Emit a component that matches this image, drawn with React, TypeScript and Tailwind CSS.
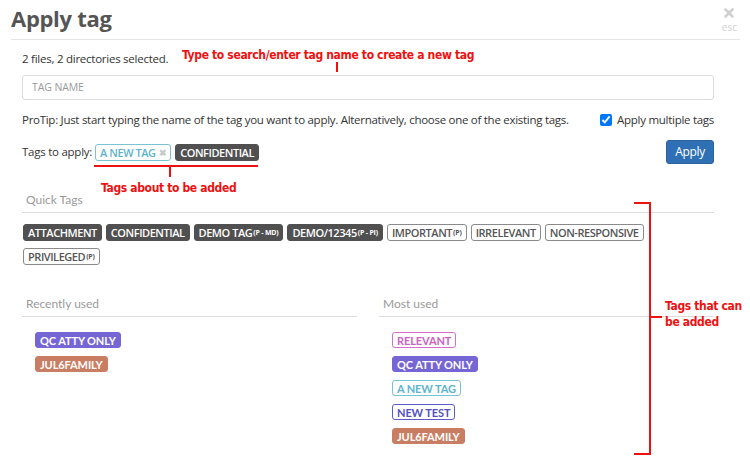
import { X } from "lucide-react";

type TagStyle = "dark" | "outline" | "relevant" | "qc" | "jul" | "newtag" | "newtest";

const tagClasses: Record<TagStyle, string> = {
  dark: "bg-[#505050] border-[#505050] text-white",
  outline: "bg-white border-[#8a8a8a] text-[#555]",
  relevant: "bg-white border-[#d36fcb] text-[#c964c1]",
  qc: "bg-[#7665d4] border-[#7665d4] text-white",
  jul: "bg-[#c97e63] border-[#c97e63] text-white",
  newtag: "bg-white border-[#79c3d3] text-[#5db4cb]",
  newtest: "bg-white border-[#5b5bc8] text-[#5151c2]",
};

function Tag({
  label,
  suffix,
  variant,
  bold,
}: {
  label: string;
  suffix?: string;
  variant: TagStyle;
  bold?: boolean;
}) {
  return (
    <span
      className={`inline-flex items-center px-[4px] rounded-[3px] border leading-none whitespace-nowrap ${
        bold
          ? "h-[16px] font-bold font-['Lato'] text-[11px] tracking-[-0.1px]"
          : "h-[17px] font-semibold text-[11px] tracking-[-0.45px]"
      } ${tagClasses[variant]}`}
    >
      {label}
      {suffix && (
        <span className="ml-[1px] text-[7px] font-bold tracking-[-0.2px]">{suffix}</span>
      )}
    </span>
  );
}

const redText =
  "text-[12px] font-bold font-['DejaVu_Sans_Condensed','DejaVu_Sans',sans-serif] text-[#ee1111] tracking-[-0.35px] leading-[16px] whitespace-nowrap";

export default function App() {
  return (
    <div className="relative w-[750px] h-[462px] overflow-hidden bg-white font-['Open_Sans','Noto_Sans',sans-serif] text-[11.5px] text-[#333]">
      {/* Header */}
      <div className="flex items-start justify-between ml-[11px] mr-[10px] h-[40px] border-b border-[#e5e5e5]">
        <h1 className="mt-[4px] text-[22px] leading-[28px] font-bold text-[#555] tracking-[-0.3px]">
          Apply tag
        </h1>
        <div className="flex flex-col items-center mt-[6px] mr-[3px] text-[#d0d0d0]">
          <X className="w-[14px] h-[14px]" strokeWidth={4.5} />
          <span className="text-[10px] leading-[12px] mt-[1px]">esc</span>
        </div>
      </div>

      {/* Body */}
      <div className="pl-[22px] pr-[36px]">
        <div className="mt-[10px] h-[18px] leading-[18px] tracking-[-0.25px]">
          2 files, 2 directories selected.
        </div>

        <div className="mt-[7px] h-[25px] rounded-[3px] border border-[#dcdcdc] flex items-center px-[9px] text-[10.5px] text-[#9a9a9a] tracking-[-0.1px]">
          TAG NAME
        </div>

        <div className="mt-[11px] h-[18px] flex items-center justify-between tracking-[-0.28px]">
          <span>
            ProTip: Just start typing the name of the tag you want to apply. Alternatively, choose one of the existing tags.
          </span>
          <label className="flex items-center gap-[5px]">
            <input
              type="checkbox"
              defaultChecked
              className="w-[12px] h-[12px] m-0 accent-[#0075ff]"
            />
            <span>Apply multiple tags</span>
          </label>
        </div>

        <div className="mt-[11px] h-[24px] flex items-center justify-between">
          <div className="flex items-center gap-[4px]">
            <span className="mr-[-1px] tracking-[-0.25px]">Tags to apply:</span>
            <span className="inline-flex items-center h-[17px] px-[4px] rounded-[3px] border border-[#79c3d3] text-[#5db4cb] bg-white text-[11px] font-semibold tracking-[-0.45px] leading-none">
              A NEW TAG
              <span className="ml-[3px] text-[9px] text-[#c8c8c8]">✖</span>
            </span>
            <Tag label="CONFIDENTIAL" variant="dark" />
          </div>
          <button className="h-[24px] px-[8px] rounded-[3px] bg-[#2f6fb3] border border-[#2a63a0] text-white text-[12px] tracking-[-0.3px]">
            Apply
          </button>
        </div>

        {/* Quick tags */}
        <div className="mt-[27px] pl-[4px] h-[22px] leading-[18px] border-b border-[#dcdcdc] text-[12px] text-[#9a9a9a] font-['Lato']">
          Quick Tags
        </div>
        <div className="mt-[11px] flex flex-wrap gap-x-[4px] gap-y-[7px] w-[640px] pl-[1px]">
          <Tag label="ATTACHMENT" variant="dark" />
          <Tag label="CONFIDENTIAL" variant="dark" />
          <Tag label="DEMO TAG" suffix="(P - MD)" variant="dark" />
          <Tag label="DEMO/12345" suffix="(P - PI)" variant="dark" />
          <Tag label="IMPORTANT" suffix="(P)" variant="outline" />
          <Tag label="IRRELEVANT" variant="outline" />
          <Tag label="NON-RESPONSIVE" variant="outline" />
          <Tag label="PRIVILEGED" suffix="(P)" variant="outline" />
        </div>

        {/* Recently / Most used */}
        <div className="mt-[30px] grid grid-cols-2 gap-x-[22px]">
          <div>
            <div className="pl-[4px] h-[22px] leading-[18px] border-b border-[#dcdcdc] text-[12px] text-[#9a9a9a] font-['Lato']">
              Recently used
            </div>
            <div className="mt-[15px] pl-[13px] flex flex-col items-start gap-[8px]">
              <Tag label="QC ATTY ONLY" variant="qc" bold />
              <Tag label="JUL6FAMILY" variant="jul" bold />
            </div>
          </div>
          <div>
            <div className="pl-[4px] h-[22px] leading-[18px] border-b border-[#dcdcdc] text-[12px] text-[#9a9a9a] font-['Lato']">
              Most used
            </div>
            <div className="mt-[15px] pl-[13px] flex flex-col items-start gap-[8px]">
              <Tag label="RELEVANT" variant="relevant" bold />
              <Tag label="QC ATTY ONLY" variant="qc" bold />
              <Tag label="A NEW TAG" variant="newtag" bold />
              <Tag label="NEW TEST" variant="newtest" bold />
              <Tag label="JUL6FAMILY" variant="jul" bold />
            </div>
          </div>
        </div>
      </div>

      {/* Red annotations overlay */}
      <div className={`absolute left-[182px] top-[47px] ${redText}`}>
        Type to search/enter tag name to create a new tag
      </div>
      <div className="absolute left-[336px] top-[62px] w-[2px] h-[10px] bg-[#ee1111]" />

      <div className="absolute left-[94px] top-[165px] w-[164px] h-[2px] bg-[#ee1111]" />
      <div className="absolute left-[169px] top-[166px] w-[2px] h-[11px] bg-[#ee1111]" />
      <div className={`absolute left-[101px] top-[180px] ${redText}`}>
        Tags about to be added
      </div>

      <div className="absolute left-[634px] top-[202px] w-[17px] h-[2px] bg-[#ee1111]" />
      <div className="absolute left-[649px] top-[202px] w-[2px] h-[253px] bg-[#ee1111]" />
      <div className="absolute left-[634px] top-[453px] w-[17px] h-[2px] bg-[#ee1111]" />
      <div className="absolute left-[650px] top-[316px] w-[12px] h-[2px] bg-[#ee1111]" />
      <div className={`absolute left-[665px] top-[298px] ${redText}`}>
        Tags that can
        <br />
        be added
      </div>
    </div>
  );
}
